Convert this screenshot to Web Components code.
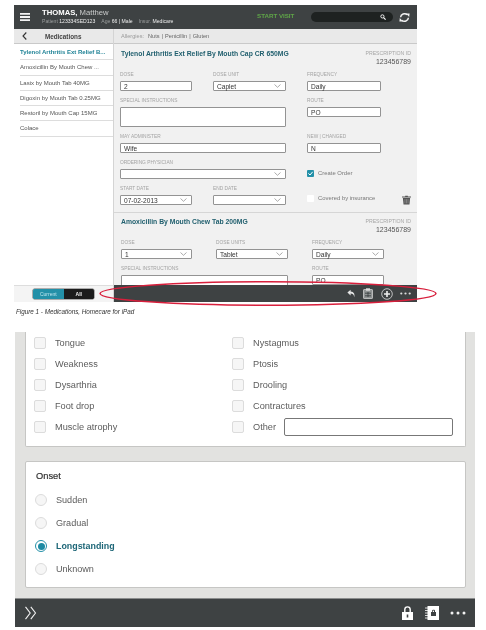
<!DOCTYPE html>
<html>
<head>
<meta charset="utf-8">
<title>Homecare</title>
<style>
  html, body { margin: 0; padding: 0; background: #fff; }
  body { width: 486px; height: 630px; overflow: hidden; font-family: "Liberation Sans", Arial, sans-serif; }
</style>
</head>
<body>
<ipad-shot>
  <med-item active>Tylenol Arthritis Ext Relief B...</med-item>
  <med-item>Amoxicillin By Mouth Chew ...</med-item>
  <med-item>Lasix by Mouth Tab 40MG</med-item>
  <med-item>Digoxin by Mouth Tab 0.25MG</med-item>
  <med-item>Restoril by Mouth Cap 15MG</med-item>
  <med-item>Colace</med-item>

  <med-section slot="main" heading="Tylenol Arthritis Ext Relief By Mouth Cap CR 650MG">
    <form-field label="DOSE">2</form-field>
    <form-field label="DOSE UNIT" select>Caplet</form-field>
    <form-field label="FREQUENCY">Daily</form-field>
    <span></span>
    <form-field label="SPECIAL INSTRUCTIONS" span="2" tall></form-field>
    <form-field label="ROUTE">PO</form-field>
    <span></span>
    <form-field label="MAY ADMINISTER" span="2">Wife</form-field>
    <form-field label="NEW | CHANGED">N</form-field>
    <span></span>
    <form-field label="ORDERING PHYSICIAN" span="2" select></form-field>
    <order-check checked>Create Order</order-check>
    <span></span>
    <form-field label="START DATE" select>07-02-2013</form-field>
    <form-field label="END DATE" select></form-field>
    <order-check>Covered by insurance</order-check>
    <trash-icon></trash-icon>
  </med-section>

  <med-section slot="main" second heading="Amoxicillin By Mouth Chew Tab 200MG">
    <form-field label="DOSE" select>1</form-field>
    <form-field label="DOSE UNITS" select>Tablet</form-field>
    <form-field label="FREQUENCY" select>Daily</form-field>
    <span></span>
    <form-field label="SPECIAL INSTRUCTIONS" span="2" tall></form-field>
    <form-field label="ROUTE">PO</form-field>
  </med-section>
</ipad-shot>

<fig-caption>Figure 1 - Medications, Homecare for iPad</fig-caption>

<neuro-form>
  <symptom-card>
    <symptom-row>Tongue</symptom-row>
    <symptom-row>Nystagmus</symptom-row>
    <symptom-row>Weakness</symptom-row>
    <symptom-row>Ptosis</symptom-row>
    <symptom-row>Dysarthria</symptom-row>
    <symptom-row>Drooling</symptom-row>
    <symptom-row>Foot drop</symptom-row>
    <symptom-row>Contractures</symptom-row>
    <symptom-row>Muscle atrophy</symptom-row>
    <symptom-row other>Other</symptom-row>
  </symptom-card>
  <onset-card heading="Onset">
    <onset-row>Sudden</onset-row>
    <onset-row>Gradual</onset-row>
    <onset-row selected>Longstanding</onset-row>
    <onset-row>Unknown</onset-row>
  </onset-card>
</neuro-form>

<script>
/**
 * Small helper, every element just renders a string into an open shadow root
 **/
const define = (name, render) => {
  customElements.define(name, class extends HTMLElement {
    constructor() {
      super();
      this.attachShadow({ mode: "open" }).innerHTML = render(this);
    }
  });
};

const DOTS = `<svg width="11" height="3" viewBox="0 0 11 3"><circle cx="1.3" cy="1.5" r="1.1" fill="#ddd"/><circle cx="5.5" cy="1.5" r="1.1" fill="#ddd"/><circle cx="9.7" cy="1.5" r="1.1" fill="#ddd"/></svg>`;

const CHEVRON = `<svg width="7" height="4" viewBox="0 0 7 4"><path d="M.5.5 3.5 3.3 6.5.5" fill="none" stroke="#888" stroke-width=".7"/></svg>`;

/**
 * Top figure: iPad medications screen
 **/
define("ipad-shot", () => `
  <style>
    :host { display: block; position: relative; width: 403px; height: 297px; margin: 5px 0 0 14px; filter: blur(.5px); color: #333; font-size: 6px; }
    .head { height: 24px; background: #3e4243; display: flex; align-items: center; color: #fff; padding-left: 6px; box-sizing: border-box; }
    .who { margin-left: 12px; width: 215px; }
    .name { font-size: 7.7px; line-height: 10px; margin-top: -1px; }
    .name b { font-weight: 700; }
    .name span { color: #c9cbcb; }
    .meta { font-size: 5.1px; line-height: 7px; color: #9b9e9e; white-space: nowrap; }
    .meta b { color: #eee; font-weight: 400; }
    .meta i { font-style: normal; margin-left: 6px; }
    .start { color: #5fa548; font-size: 6.2px; font-weight: 700; width: 54px; margin-top: -4px; white-space: nowrap; }
    .search { width: 82px; height: 10px; border-radius: 5px; background: #1e2221; display: flex; align-items: center; justify-content: flex-end; padding-right: 7px; box-sizing: border-box; margin-top: -1px; }
    .sync { margin-left: 6px; display: flex; }
    .body { display: flex; height: 273px; }
    .side { width: 100px; background: #fff; border-right: 1px solid #d4d4d4; box-sizing: border-box; display: flex; flex-direction: column; }
    .sub { height: 15px; background: #e9e9e9; border-bottom: 1px solid #c9c9c9; box-sizing: border-box; display: flex; align-items: center; flex: none; }
    .side .sub { padding-left: 8px; font-weight: 700; font-size: 6.3px; color: #444; }
    .side .sub svg { margin-right: 18px; }
    .list { flex: 1; padding: 1px 0 0 6px; }
    .foot { height: 17px; flex: none; border-top: 1px solid #ddd; background: #f4f4f4; box-sizing: border-box; display: flex; align-items: center; padding-left: 19px; }
    .toggle { display: flex; width: 61px; height: 10px; border-radius: 1.5px; overflow: hidden; font-size: 5px; line-height: 10px; text-align: center; box-shadow: 0 0 0 .5px #666; }
    .toggle span { flex: 1; color: #bfe6ef; background: #2390a8; }
    .toggle span + span { color: #eee; background: #1c1c1c; font-weight: 700; }
    .main { flex: 1; min-width: 0; display: flex; flex-direction: column; background: #f1f1f1; }
    .main .sub { padding-left: 7px; font-size: 5.6px; color: #666; word-spacing: .5px; }
    .main .sub em { font-style: normal; color: #9a9a9a; margin-right: 4px; }
    .scroll { flex: 1; min-height: 0; overflow: hidden; }
    .bar { height: 17px; flex: none; background: #3e4243; display: flex; align-items: center; justify-content: flex-end; gap: 7.5px; padding-right: 6px; box-sizing: border-box; }
    .ring { position: absolute; left: 85px; top: 276px; width: 338px; height: 25px; overflow: visible; }
  </style>
  <div class="head">
    <svg width="10" height="8" viewBox="0 0 10 8"><path d="M0 0h10v1.8H0zM0 3.1h10v1.8H0zM0 6.2h10V8H0z" fill="#f2f2f2"/></svg>
    <div class="who">
      <div class="name"><b>THOMAS,</b> <span>Matthew</span></div>
      <div class="meta">Patient <b>123334SED123</b><i>Age <b>66 | Male</b></i><i>Insur. <b>Medicare</b></i></div>
    </div>
    <div class="start">START VISIT</div>
    <div class="search"><svg width="6" height="6" viewBox="0 0 6 6"><circle cx="2.4" cy="2.4" r="1.6" fill="none" stroke="#fff" stroke-width=".9"/><path d="M3.6 3.6 5.6 5.6" stroke="#fff" stroke-width="1.1"/></svg></div>
    <div class="sync"><svg width="11" height="9" viewBox="0 0 11 9"><path d="M1.6 4.2A3.9 3.6 0 0 1 8.2 1.8" fill="none" stroke="#f2f2f2" stroke-width="1.5"/><path d="M9.4 4.8A3.9 3.6 0 0 1 2.8 7.2" fill="none" stroke="#f2f2f2" stroke-width="1.5"/><path d="M7 .6 10.6 .4 10.2 4zM4 8.4 .4 8.6 .8 5z" fill="#f2f2f2"/></svg></div>
  </div>
  <div class="body">
    <div class="side">
      <div class="sub"><svg width="5" height="8" viewBox="0 0 5 8"><path d="M4.3.5 1 4l3.3 3.5" fill="none" stroke="#333" stroke-width="1.1"/></svg>Medications</div>
      <div class="list"><slot></slot></div>
      <div class="foot"><div class="toggle"><span>Current</span><span>All</span></div></div>
    </div>
    <div class="main">
      <div class="sub"><em>Allergies:</em> Nuts | Penicillin | Gluten</div>
      <div class="scroll"><slot name="main"></slot></div>
      <div class="bar">
        <svg width="9" height="9" viewBox="0 0 9 9"><path d="M3.6.8.4 3.6l3.2 2.8V4.6c2 0 3.2.8 3.6 3.6.9-3-.2-5.6-3.6-5.800z" fill="#e6e6e6"/></svg>
        <svg width="10" height="11" viewBox="0 0 10 11"><rect x=".5" y="1.5" width="9" height="9" rx=".6" fill="#8f9393" stroke="#ddd" stroke-width=".7"/><rect x="3" y=".3" width="4" height="2.4" fill="#ddd"/><path d="M2 5.2h6M2 7.8h6M5 4v5" stroke="#33383a" stroke-width=".8"/></svg>
        <svg width="12" height="12" viewBox="0 0 12 12"><circle cx="6" cy="6" r="5.3" fill="none" stroke="#ddd" stroke-width=".8"/><path d="M6 3v6M3 6h6" stroke="#eee" stroke-width="1.6"/></svg>
        ${DOTS}
      </div>
    </div>
  </div>
  <svg class="ring" viewBox="0 0 338 25" preserveAspectRatio="none"><ellipse cx="169" cy="12.5" rx="168" ry="11.8" fill="none" stroke="#d81f3c" stroke-width="1.5"/></svg>
`);

define("med-item", (el) => `
  <style>
    :host { display: block; height: 15.3px; line-height: 14px; font-size: 6px; color: ${el.hasAttribute("active") ? "#1f8296" : "#555"}; font-weight: ${el.hasAttribute("active") ? 700 : 400}; border-bottom: 1px solid #ddd; box-sizing: border-box; white-space: nowrap; overflow: hidden; }
  </style>
  <slot></slot>
`);

define("med-section", (el) => {
  const second = el.hasAttribute("second");
  return `
  <style>
    :host { display: block; padding: ${second ? "5px 6px 0 7px" : "6px 6px 7px 6px"}; border-bottom: ${second ? "0" : "1px solid #d6d6d6"}; }
    .top { display: flex; justify-content: space-between; height: 21px; }
    h2 { margin: 0 0 0 ${second ? 0 : 1}px; font-size: 6.8px; line-height: 8px; color: #22606f; font-weight: 700; white-space: nowrap; }
    .rx { text-align: right; font-size: 5.2px; line-height: 7px; color: #a6a6a6; }
    .rx div { font-size: 7px; line-height: 10px; color: #555; }
    .grid { display: grid; grid-template-columns: ${second ? "71px 72px 72px 1fr" : "72px 73px 74px 1fr"}; column-gap: ${second ? 24 : 21}px; row-gap: 6px; align-items: start; }
  </style>
  <div class="top">
    <h2>${el.getAttribute("heading")}</h2>
    <div class="rx">PRESCRIPTION ID<div>123456789</div></div>
  </div>
  <div class="grid"><slot></slot></div>
`;
});

define("form-field", (el) => {
  const span = el.getAttribute("span") || 1;
  el.style.gridColumn = `span ${span}`;
  return `
  <style>
    :host { display: block; min-width: 0; }
    label { display: block; height: 7px; line-height: 7px; margin-bottom: 3px; font-size: 4.8px; color: #a3a3a3; white-space: nowrap; }
    .box { height: ${el.hasAttribute("tall") ? 20 : 10}px; box-sizing: border-box; border: 1px solid #939393; border-radius: 1px; background: #fff; display: flex; align-items: center; justify-content: space-between; padding: 0 4px 0 3px; font-size: 6.6px; color: #333; white-space: nowrap; }
  </style>
  <label>${el.getAttribute("label")}</label>
  <div class="box"><span><slot></slot></span>${el.hasAttribute("select") ? CHEVRON : ""}</div>
`;
});

define("order-check", (el) => {
  const on = el.hasAttribute("checked");
  return `
  <style>
    :host { display: flex; align-items: center; gap: 4px; height: 10px; margin-bottom: ${on ? 1 : 2}px; font-size: 5.9px; color: #777; white-space: nowrap; align-self: end; }
    .c { width: 7px; height: 7px; border-radius: 1px; background: ${on ? "#2390a8" : "#fff"}; display: flex; flex: none; }
  </style>
  <span class="c">${on ? `<svg width="7" height="7" viewBox="0 0 7 7"><path d="M1.4 3.4 3 5l2.7-3.2" fill="none" stroke="#fff" stroke-width="1"/></svg>` : ""}</span>
  <span><slot></slot></span>
`;
});

define("trash-icon", () => `
  <style>
    :host { display: flex; justify-content: flex-end; align-self: end; }
  </style>
  <svg width="9" height="10" viewBox="0 0 10 10"><path d="M3.5 1V.3h3V1H10v1.2H0V1z" fill="#555"/><path d="M1 2.8h8L8.300 10H1.700z" fill="#555"/><path d="M3.300 4v4.800M5 4v4.800M6.700 4v4.800" stroke="#aaa" stroke-width=".6"/></svg>
`);

define("fig-caption", () => `
  <style>
    :host { display: block; margin: 5px 0 0 16px; height: 10px; line-height: 10px; font-size: 6.3px; font-style: italic; color: #333; filter: blur(.3px); white-space: nowrap; }
  </style>
  <slot></slot>
`);

/**
 * Bottom figure: neuro exam form
 **/
define("neuro-form", () => `
  <style>
    :host { display: flex; flex-direction: column; width: 460px; height: 295px; margin: 15px 0 0 15px; background: #e2e2e0; color: #5a5a5a; font-size: 9.2px; filter: blur(.3px); }
    .cards { flex: none; box-sizing: border-box; padding: 0 9px 10px 10px; display: flex; flex-direction: column; gap: 14px; height: 266px; }
    .bar { height: 29px; flex: none; background: #3e4243; border-top: 1px solid #8b8d8d; box-sizing: border-box; display: flex; align-items: center; padding: 0 9px 0 9px; }
    .bar .gap { flex: 1; }
    .bar .note { margin: 0 11px 0 12px; }
  </style>
  <div class="cards"><slot></slot></div>
  <div class="bar">
    <svg width="13" height="14" viewBox="0 0 13 14"><path d="M1.500.8 6.200 7l-4.700 6.200M6.800.8 11.500 7l-4.700 6.200" fill="none" stroke="#f2f2f2" stroke-width="1.100"/></svg>
    <div class="gap"></div>
    <svg width="11" height="14" viewBox="0 0 11 14"><path d="M2.800 6V3.600a2.700 2.700 0 0 1 5.400 0V6" fill="none" stroke="#fff" stroke-width="1.400"/><path fill-rule="evenodd" d="M0 6h11v8H0zM4.700 8.600v3h1.600v-3z" fill="#fff"/></svg>
    <svg class="note" width="14" height="14" viewBox="0 0 14 14"><path fill-rule="evenodd" d="M2.500 0H14v14H2.500zM8.300 3.800A1.300 1.300 0 0 0 7 5.100V6H6v4h5V6h-1v-.9a1.300 1.300 0 0 0-1.700-1.300zM7.800 6v-.9a.6.6 0 0 1 1.200 0V6z" fill="#fff"/><path d="M0 2h3M0 4.500h3M0 7h3M0 9.500h3M0 12h3" stroke="#fff" stroke-width=".8"/></svg>
    <svg width="16" height="4" viewBox="0 0 16 4"><circle cx="2" cy="2" r="1.500" fill="#f2f2f2"/><circle cx="8" cy="2" r="1.500" fill="#f2f2f2"/><circle cx="14" cy="2" r="1.500" fill="#f2f2f2"/></svg>
  </div>
`);

define("symptom-card", () => `
  <style>
    :host { display: block; flex: none; height: 115px; box-sizing: border-box; background: #fff; border: 1px solid #c6c6c4; border-top: 0; border-radius: 0 0 2px 2px; padding-left: 8px; }
    .grid { display: grid; grid-template-columns: 198px 1fr; grid-auto-rows: 21.2px; }
  </style>
  <div class="grid"><slot></slot></div>
`);

define("symptom-row", (el) => `
  <style>
    :host { display: flex; align-items: center; gap: 9px; font-size: 9.2px; color: #5c5c5c; white-space: nowrap; }
    .c { width: 12px; height: 12px; flex: none; box-sizing: border-box; border: 1px solid #dcdcdc; border-radius: 2px; background: #f6f6f6; }
    .o { width: 169px; height: 18px; box-sizing: border-box; margin-left: -1px; margin-top: -1px; border: 1px solid #777; border-radius: 2px; background: #fff; }
  </style>
  <span class="c"></span><span><slot></slot></span>${el.hasAttribute("other") ? `<span class="o"></span>` : ""}
`);

define("onset-card", (el) => `
  <style>
    :host { display: block; flex: 1; box-sizing: border-box; background: #fff; border: 1px solid #c6c6c4; border-radius: 2px; padding: 8px 0 0 9px; }
    h3 { margin: 0 0 6.5px 1px; font-size: 9.3px; line-height: 12px; font-weight: 400; color: #333; -webkit-text-stroke: .2px #333; }
  </style>
  <h3>${el.getAttribute("heading")}</h3>
  <slot></slot>
`);

define("onset-row", (el) => {
  const on = el.hasAttribute("selected");
  return `
  <style>
    :host { display: flex; align-items: center; gap: 9px; height: 23px; font-size: ${on ? 8.9 : 9.1}px; color: ${on ? "#1d6677" : "#5c5c5c"}; font-weight: ${on ? 700 : 400}; white-space: nowrap; }
    .r { width: 12px; height: 12px; flex: none; box-sizing: border-box; border-radius: 50%; border: 1px solid ${on ? "#2390a8" : "#dcdcdc"}; background: ${on ? "#fff" : "#f6f6f6"}; display: flex; align-items: center; justify-content: center; }
    .r i { width: 7px; height: 7px; border-radius: 50%; background: #1c8aa3; }
  </style>
  <span class="r">${on ? "<i></i>" : ""}</span><span><slot></slot></span>
`;
});
</script>
</body>
</html>
